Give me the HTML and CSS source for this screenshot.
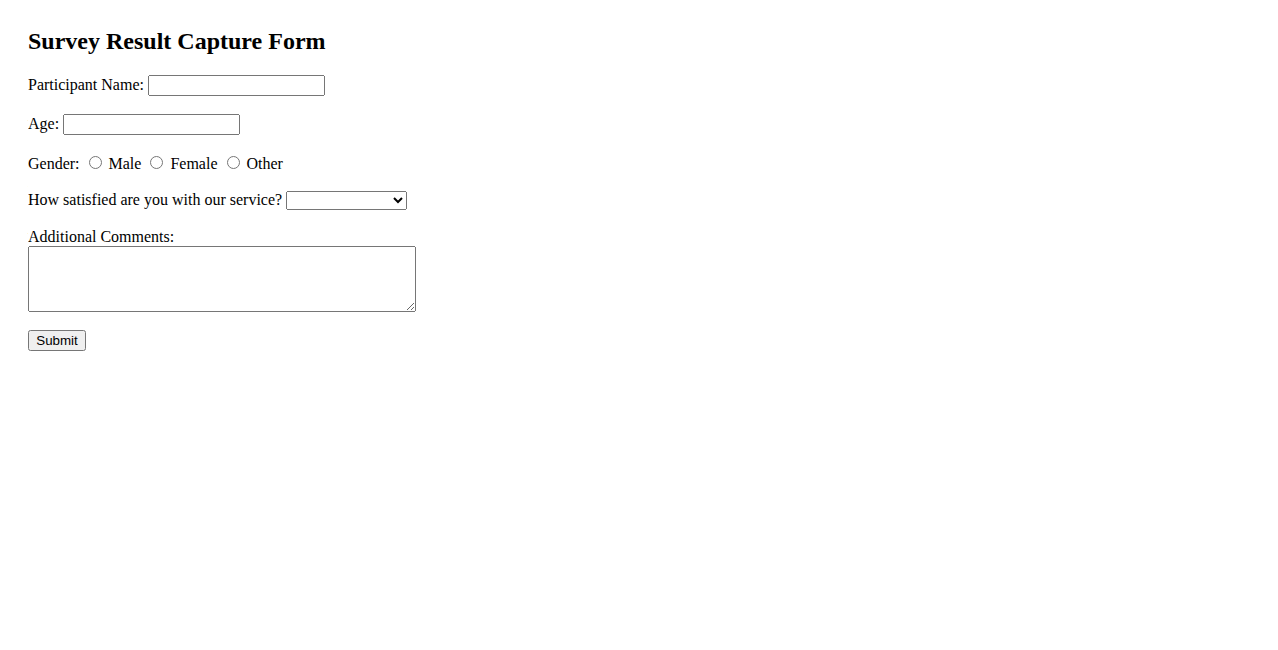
FILE: index.html
```html
<!DOCTYPE html>
<html>
<head>
<meta charset="utf-8">
<title>Survey Result Capture Form</title>
<link rel="stylesheet" href="styles.css">
</head>
<body>
<h2 class="title">Survey Result Capture Form</h2>
<form class="survey">
  <div class="row">
    <label for="name">Participant Name:</label>
    <input type="text" id="name" class="field">
  </div>
  <div class="row">
    <label for="age">Age:</label>
    <input type="text" id="age" class="field">
  </div>
  <div class="row">
    <label>Gender:</label>
    <input type="radio" name="g" id="m"> <label for="m">Male</label>
    <input type="radio" name="g" id="f"> <label for="f">Female</label>
    <input type="radio" name="g" id="o"> <label for="o">Other</label>
  </div>
  <div class="row">
    <label for="sat">How satisfied are you with our service?</label>
    <select id="sat" class="choice"></select>
  </div>
  <div class="row row-comments">
    <label for="c">Additional Comments:</label><br>
    <textarea id="c" class="comments"></textarea>
  </div>
  <div class="row">
    <button type="submit" class="submit">Submit</button>
  </div>
</form>
</body>
</html>
```
FILE: styles.css
```css
body {
  margin: 8px;
  padding: 0 20px;
  font-family: "Liberation Serif", "Times New Roman", serif;
  font-size: 16px;
  color: #000;
  background: #fff;
}
.title {
  font-size: 24px;
  margin: 20px 0 20px;
}
.row {
  margin-bottom: 18px;
}
.row-comments {
  margin-bottom: 14px;
}
.field {
  width: 177px;
  height: 21px;
  box-sizing: border-box;
}
.choice {
  width: 121px;
  height: 19px;
  box-sizing: border-box;
}
.comments {
  width: 388px;
  height: 66px;
  box-sizing: border-box;
}
.submit {
  font-family: "Liberation Sans", Arial, sans-serif;
  font-size: 13.33px;
  width: 58px;
}
```
